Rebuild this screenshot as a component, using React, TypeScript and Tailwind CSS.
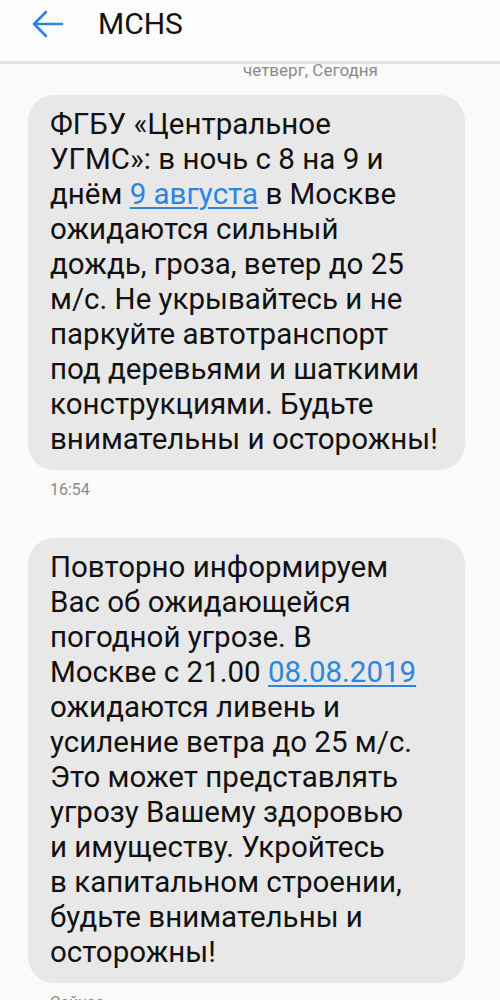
const first = [
  'ФГБУ «Центральное',
  'УГМС»: в ночь с 8 на 9 и',
  null,
  'ожидаются сильный',
  'дождь, гроза, ветер до 25',
  'м/с. Не укрывайтесь и не',
  'паркуйте автотранспорт',
  'под деревьями и шаткими',
  'конструкциями. Будьте',
  'внимательны и осторожны!',
]

const second = [
  'Повторно информируем',
  'Вас об ожидающейся',
  'погодной угрозе. В',
  null,
  'ожидаются ливень и',
  'усиление ветра до 25 м/с.',
  'Это может представлять',
  'угрозу Вашему здоровью',
  'и имуществу. Укройтесь',
  'в капитальном строении,',
  'будьте внимательны и',
  'осторожны!',
]

function Link({ children }: { children: string }) {
  return <span className="text-[#2a86e0] underline decoration-[1.5px] underline-offset-[3px]">{children}</span>
}

function Bubble({ lines, special }: { lines: (string | null)[]; special: JSX.Element }) {
  return (
    <div className="ml-[28px] mr-[35px] rounded-[26px] bg-[#e8e8e8] pl-[22px] pr-[12px] pt-[12px] pb-[13px]">
      {lines.map((l, i) => (
        <div key={i} className="h-[35px] whitespace-nowrap text-[29.5px] leading-[35px] text-[#111]">
          {l === null ? special : l}
        </div>
      ))}
    </div>
  )
}

export default function App() {
  return (
    <div className="h-[1000px] overflow-hidden bg-[#fafafa]" style={{ fontFamily: 'Roboto, "Noto Sans", sans-serif' }}>
      <div className="relative z-10 flex h-[64px] items-center border-b-[3px] border-[#e2e2e2] bg-[#fcfcfc] pb-[13px]">
        <svg className="ml-[32px] h-[32px] w-[32px]" viewBox="0 0 32 32" fill="none" stroke="#2a86e0" strokeWidth="2.6" strokeLinecap="round" strokeLinejoin="round">
          <path d="M30 16H2M14 4L2 16l12 12" />
        </svg>
        <span className="ml-[34px] text-[30px] leading-none text-[#111]">MCHS</span>
      </div>
      <div className="-mt-[4px] h-[35px] pl-[243px] text-[17px] leading-[20px] text-[#8a8a8a]">четверг, Сегодня</div>

      <Bubble
        lines={first}
        special={
          <>
            днём <Link>9 августа</Link> в Москве
          </>
        }
      />
      <div className="mt-[10px] mb-[38px] h-[20px] pl-[50px] text-[16px] leading-[20px] text-[#8a8a8a]">16:54</div>

      <Bubble
        lines={second}
        special={
          <>
            Москве с 21.00 <Link>08.08.2019</Link>
          </>
        }
      />
      <div className="mt-[10px] pl-[50px] text-[16px] leading-[20px] text-[#8a8a8a]">Сейчас</div>
    </div>
  )
}
